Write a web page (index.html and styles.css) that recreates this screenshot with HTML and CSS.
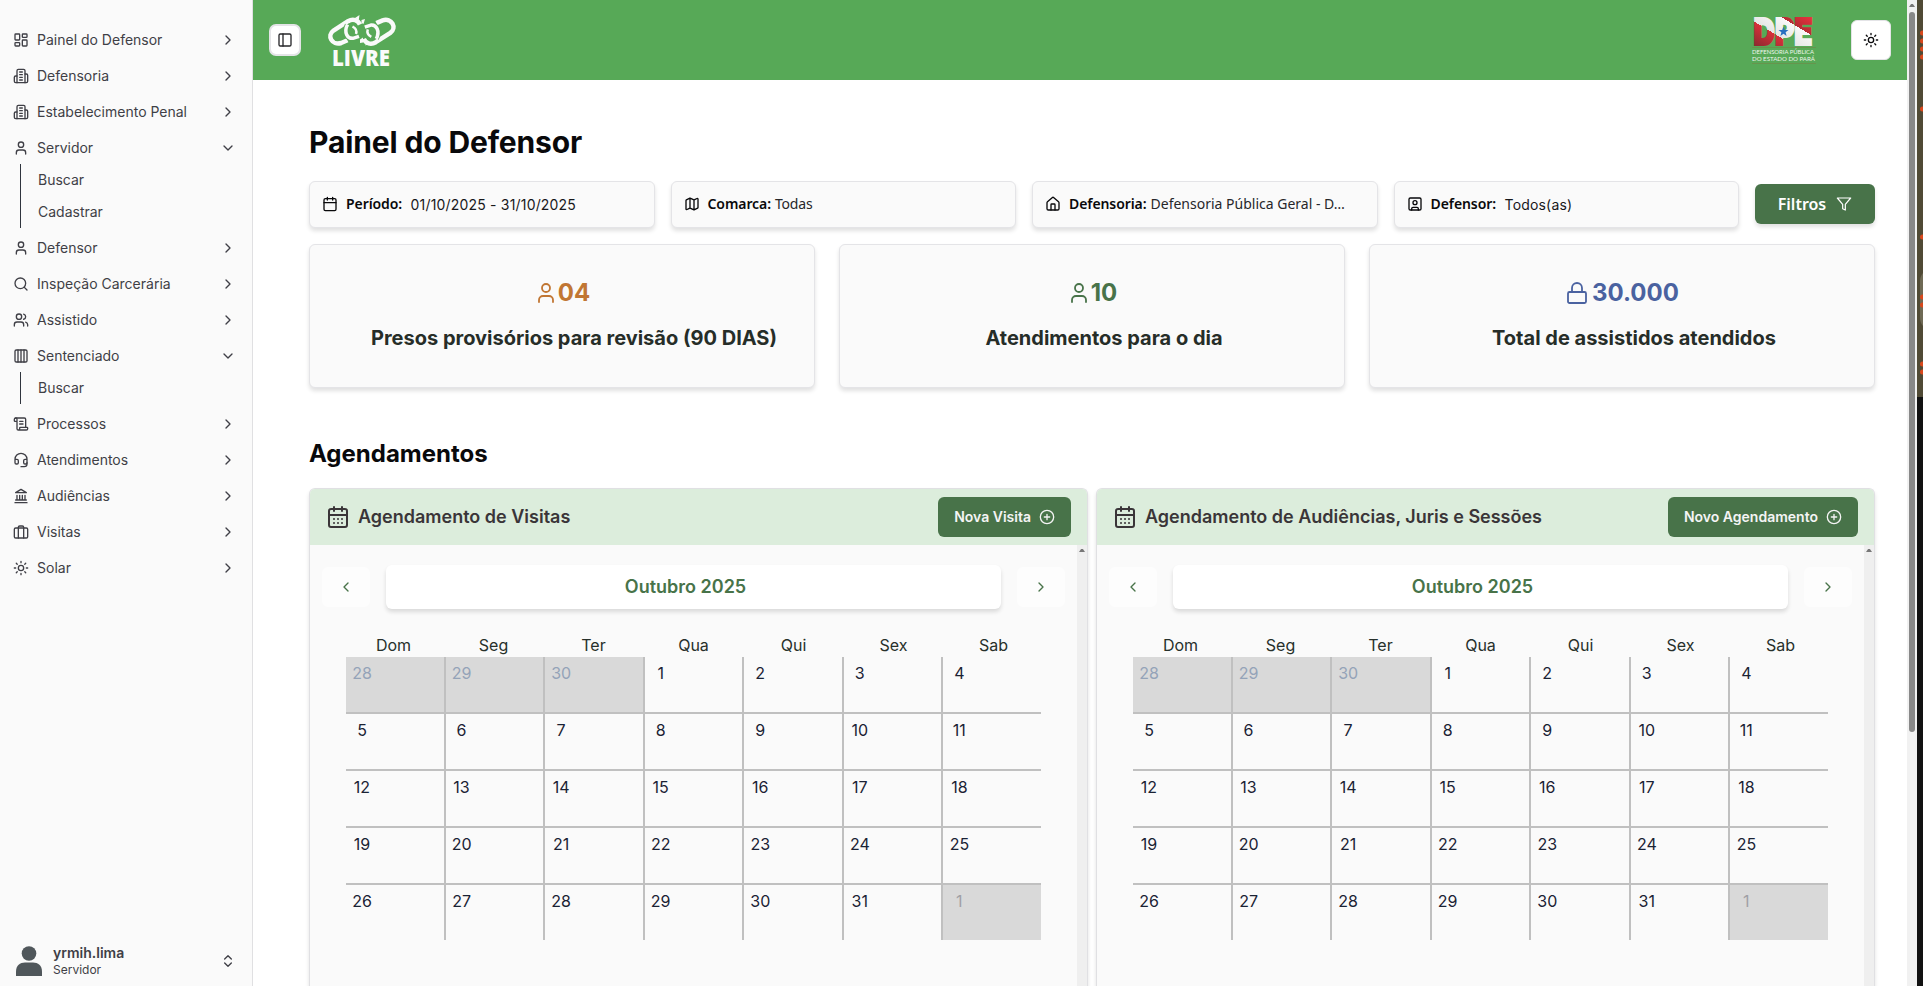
FILE: index.html
```html
<!DOCTYPE html>
<html lang="pt-BR">
<head>
<meta charset="utf-8">
<title>Painel do Defensor</title>
<link rel="stylesheet" href="styles.css">
</head>
<body>
<svg class="sprite" aria-hidden="true">
  <symbol id="dash" viewBox="0 0 24 24"><rect x="3" y="3" width="7" height="9" rx="1"/><rect x="14" y="3" width="7" height="5" rx="1"/><rect x="14" y="12" width="7" height="9" rx="1"/><rect x="3" y="16" width="7" height="5" rx="1"/></symbol>
  <symbol id="building" viewBox="0 0 24 24"><path d="M6 22V4a2 2 0 0 1 2-2h8a2 2 0 0 1 2 2v18Z"/><path d="M6 12H4a2 2 0 0 0-2 2v6a2 2 0 0 0 2 2h2"/><path d="M18 9h2a2 2 0 0 1 2 2v9a2 2 0 0 1-2 2h-2"/><path d="M10 6h4M10 10h4M10 14h4M10 18h4"/></symbol>
  <symbol id="user" viewBox="0 0 24 24"><path d="M19 21v-2a4 4 0 0 0-4-4H9a4 4 0 0 0-4 4v2"/><circle cx="12" cy="7" r="4"/></symbol>
  <symbol id="search" viewBox="0 0 24 24"><circle cx="11" cy="11" r="8"/><path d="m21 21-4.3-4.3"/></symbol>
  <symbol id="users" viewBox="0 0 24 24"><path d="M16 21v-2a4 4 0 0 0-4-4H6a4 4 0 0 0-4 4v2"/><circle cx="9" cy="7" r="4"/><path d="M22 21v-2a4 4 0 0 0-3-3.87"/><path d="M16 3.13a4 4 0 0 1 0 7.75"/></symbol>
  <symbol id="bars" viewBox="0 0 24 24"><rect x="3" y="3" width="18" height="18" rx="2"/><path d="M7.5 3v18M12 3v18M16.500 3v18"/></symbol>
  <symbol id="scroll" viewBox="0 0 24 24"><path d="M15 12h-5M15 8h-5M19 17V5a2 2 0 0 0-2-2H4"/><path d="M8 21h12a2 2 0 0 0 2-2v-1a1 1 0 0 0-1-1H11a1 1 0 0 0-1 1v1a2 2 0 1 1-4 0V5a2 2 0 1 0-4 0v2a1 1 0 0 0 1 1h3"/></symbol>
  <symbol id="headset" viewBox="0 0 24 24"><path d="M3 11h3a2 2 0 0 1 2 2v3a2 2 0 0 1-2 2H5a2 2 0 0 1-2-2v-5Zm0 0a9 9 0 1 1 18 0m0 0v5a2 2 0 0 1-2 2h-1a2 2 0 0 1-2-2v-3a2 2 0 0 1 2-2h3Z"/><path d="M21 16v2a4 4 0 0 1-4 4h-5"/></symbol>
  <symbol id="landmark" viewBox="0 0 24 24"><path d="M3 22h18M6 18v-7M10 18v-7M14 18v-7M18 18v-7M4 18h16M12 2l8 5H4z"/></symbol>
  <symbol id="luggage" viewBox="0 0 24 24"><path d="M8 21V5a2 2 0 0 1 2-2h4a2 2 0 0 1 2 2v16"/><rect x="2" y="6" width="20" height="15" rx="2"/></symbol>
  <symbol id="sun" viewBox="0 0 24 24"><circle cx="12" cy="12" r="4"/><path d="M12 2v2M12 20v2M4.930 4.930l1.410 1.410M17.660 17.660l1.410 1.410M2 12h2M20 12h2M6.340 17.660l-1.410 1.410M19.070 4.930l-1.410 1.410"/></symbol>
  <symbol id="right" viewBox="0 0 24 24"><path d="m9 18 6-6-6-6"/></symbol>
  <symbol id="left" viewBox="0 0 24 24"><path d="m15 18-6-6 6-6"/></symbol>
  <symbol id="down" viewBox="0 0 24 24"><path d="m6 9 6 6 6-6"/></symbol>
  <symbol id="updown" viewBox="0 0 24 24"><path d="m7 15 5 5 5-5M7 9l5-5 5 5"/></symbol>
  <symbol id="panel" viewBox="0 0 24 24"><rect x="3" y="3" width="18" height="18" rx="2"/><path d="M9 3v18"/></symbol>
  <symbol id="calendar" viewBox="0 0 24 24"><path d="M8 2v4M16 2v4M3 10h18"/><rect x="3" y="4" width="18" height="18" rx="2"/></symbol>
  <symbol id="days" viewBox="0 0 24 24"><path d="M8 2v4M16 2v4M3 10h18"/><rect x="3" y="4" width="18" height="18" rx="2"/><path d="M8 14h.01M12 14h.01M16 14h.01M8 18h.01M12 18h.01M16 18h.01"/></symbol>
  <symbol id="map" viewBox="0 0 24 24"><path d="M14.100 5.550a2 2 0 0 0 1.800 0l3.650-1.830A1 1 0 0 1 21 4.620v12.760a1 1 0 0 1-.55.9l-4.550 2.270a2 2 0 0 1-1.800 0l-4.200-2.100a2 2 0 0 0-1.800 0l-3.650 1.830A1 1 0 0 1 3 19.380V6.620a1 1 0 0 1 .55-.9L8.100 3.450a2 2 0 0 1 1.800 0zM15 5.760v15M9 3.240v15"/></symbol>
  <symbol id="home" viewBox="0 0 24 24"><path d="M15 21v-8a1 1 0 0 0-1-1h-4a1 1 0 0 0-1 1v8"/><path d="M3 10a2 2 0 0 1 .7-1.530l7-6a2 2 0 0 1 2.600 0l7 6A2 2 0 0 1 21 10v9a2 2 0 0 1-2 2H5a2 2 0 0 1-2-2z"/></symbol>
  <symbol id="portrait" viewBox="0 0 24 24"><rect x="3" y="3" width="18" height="18" rx="2"/><circle cx="12" cy="10" r="3"/><path d="M7 21v-2a2 2 0 0 1 2-2h6a2 2 0 0 1 2 2v2"/></symbol>
  <symbol id="funnel" viewBox="0 0 24 24"><path d="M22 3H2l8 9.460V19l4 2v-8.540z"/></symbol>
  <symbol id="lock" viewBox="0 0 24 24"><rect x="3" y="11" width="18" height="11" rx="1.500"/><path d="M7 11V7a5 5 0 0 1 10 0v4"/></symbol>
  <symbol id="plus" viewBox="0 0 24 24"><circle cx="12" cy="12" r="10"/><path d="M8 12h8M12 8v8"/></symbol>
</svg>
<div class="screen">
  <aside class="sidebar">
    <nav class="menu">
      <a class="item"><svg class="ic"><use href="#dash"/></svg><span>Painel do Defensor</span><svg class="ic"><use href="#right"/></svg></a>
      <a class="item"><svg class="ic"><use href="#building"/></svg><span>Defensoria</span><svg class="ic"><use href="#right"/></svg></a>
      <a class="item"><svg class="ic"><use href="#building"/></svg><span>Estabelecimento Penal</span><svg class="ic"><use href="#right"/></svg></a>
      <div>
        <a class="item"><svg class="ic"><use href="#user"/></svg><span>Servidor</span><svg class="ic"><use href="#down"/></svg></a>
        <div class="sub"><a>Buscar</a><a>Cadastrar</a></div>
      </div>
      <a class="item"><svg class="ic"><use href="#user"/></svg><span>Defensor</span><svg class="ic"><use href="#right"/></svg></a>
      <a class="item"><svg class="ic"><use href="#search"/></svg><span>Inspeção Carcerária</span><svg class="ic"><use href="#right"/></svg></a>
      <a class="item"><svg class="ic"><use href="#users"/></svg><span>Assistido</span><svg class="ic"><use href="#right"/></svg></a>
      <div>
        <a class="item"><svg class="ic"><use href="#bars"/></svg><span>Sentenciado</span><svg class="ic"><use href="#down"/></svg></a>
        <div class="sub"><a>Buscar</a></div>
      </div>
      <a class="item"><svg class="ic"><use href="#scroll"/></svg><span>Processos</span><svg class="ic"><use href="#right"/></svg></a>
      <a class="item"><svg class="ic"><use href="#headset"/></svg><span>Atendimentos</span><svg class="ic"><use href="#right"/></svg></a>
      <a class="item"><svg class="ic"><use href="#landmark"/></svg><span>Audiências</span><svg class="ic"><use href="#right"/></svg></a>
      <a class="item"><svg class="ic"><use href="#luggage"/></svg><span>Visitas</span><svg class="ic"><use href="#right"/></svg></a>
      <a class="item"><svg class="ic"><use href="#sun"/></svg><span>Solar</span><svg class="ic"><use href="#right"/></svg></a>
    </nav>
    <div class="account">
      <svg class="avatar" viewBox="0 0 26 30"><circle cx="13" cy="7.500" r="7.300"/><path d="M0 30v-4.500C0 19.500 4 16.500 9 16.500h8c5 0 9 3 9 9V30z"/></svg>
      <div class="who"><b>yrmih.lima</b><small>Servidor</small></div>
      <svg class="ic"><use href="#updown"/></svg>
    </div>
  </aside>
  <div class="page">
    <header class="topbar">
      <button class="toggle"><svg class="ic"><use href="#panel"/></svg></button>
      <svg class="livre" viewBox="0 0 68 52">
        <defs>
          <g id="link" fill="none">
            <path d="M19.500 25.300L13.200 28C4 31 -1.500 20.500 5.500 15.500L20 6.200C25 3.200 30 5 32 9.500" stroke="#fafafa" stroke-width="4.500"/>
            <path d="M19.500 10C15.500 17.500 19.500 24 25 23.300L31 21.300" stroke="#57a957" stroke-width="5.500"/>
            <path d="M19.500 9.500C15.500 17.500 19.500 24 25 23.300L31 21.300" stroke="#fafafa" stroke-width="3.500"/>
            <path d="M24.500 11.500C27.500 13 29 16 28 19" stroke="#fafafa" stroke-width="2.500"/>
          </g>
        </defs>
        <use href="#link"/><use href="#link" transform="rotate(180 33.900 16.700)"/>
        <path d="M27 3l4.500-3-.7 5zM33.500 5l3.500-1-1.500 5-2-1zM32 24.500l3-2v5l-3 .5zM37.500 26l3 3-3 1.500z" fill="#fafafa"/>
        <text x="4" y="51" textLength="58" lengthAdjust="spacingAndGlyphs">LIVRE</text>
      </svg>
      <div class="spacer"></div>
      <svg class="dpe" viewBox="0 0 66 48">
        <defs>
          <linearGradient id="band" gradientUnits="userSpaceOnUse" x1="3" y1="30" x2="30.800" y2="-16.300">
            <stop offset="0" stop-color="#8c2a30"/><stop offset=".38" stop-color="#d9303a"/><stop offset=".38" stop-color="#e6e6e6"/><stop offset=".71" stop-color="#f8f8f8"/><stop offset=".71" stop-color="#b52b33"/><stop offset="1" stop-color="#e8323e"/>
          </linearGradient>
        </defs>
        <text class="mark" x="1.500" y="28.700" textLength="59" lengthAdjust="spacingAndGlyphs" fill="url(#band)" stroke="url(#band)">DPE</text>
        <path d="M31.500 10.500l1.300 3.400 3.700.1-2.900 2.300 1 3.600-3.100-2.100-3.100 2.100 1-3.600-2.900-2.300 3.700-.1z" fill="#2a6fc0"/>
        <path d="M0 31.500h64M0 47.500h64" stroke="#6b8f4a" stroke-width=".8"/>
        <text class="cap" x="0" y="38.300" textLength="62" lengthAdjust="spacingAndGlyphs">DEFENSORIA PÚBLICA</text>
        <text class="cap" x="0" y="44.800" textLength="63" lengthAdjust="spacingAndGlyphs">DO ESTADO DO PARÁ</text>
      </svg>
      <button class="theme"><svg class="ic"><use href="#sun"/></svg></button>
    </header>
    <main class="content">
      <h1>Painel do Defensor</h1>
      <div class="filters">
        <div class="field"><svg class="ic"><use href="#calendar"/></svg><b>Período:</b><span class="plain">01/10/2025 - 31/10/2025</span></div>
        <div class="field"><svg class="ic"><use href="#map"/></svg><b>Comarca:</b><span class="soft">Todas</span></div>
        <div class="field"><svg class="ic"><use href="#home"/></svg><b>Defensoria:</b><span class="soft long">Defensoria Pública Geral - D…</span></div>
        <div class="field"><svg class="ic"><use href="#portrait"/></svg><b>Defensor:</b><span class="plain">Todos(as)</span></div>
        <button class="filter-btn"><span>Filtros</span><svg class="ic"><use href="#funnel"/></svg></button>
      </div>
      <div class="stats">
        <section class="stat orange"><div class="num"><svg class="ic"><use href="#user"/></svg>04</div><p>Presos provisórios para revisão (90 DIAS)</p></section>
        <section class="stat green"><div class="num"><svg class="ic"><use href="#user"/></svg>10</div><p>Atendimentos para o dia</p></section>
        <section class="stat blue"><div class="num wide"><svg class="ic"><use href="#lock"/></svg>30.000</div><p>Total de assistidos atendidos</p></section>
      </div>
      <h2>Agendamentos</h2>
      <div class="agendas">
        <section class="agenda">
          <div class="agenda-head"><svg class="ic"><use href="#days"/></svg><h3>Agendamento de Visitas</h3><button class="new">Nova Visita<svg class="ic"><use href="#plus"/></svg></button></div>
          <div class="agenda-body"><div class="calendar"></div><div class="track"><i></i></div></div>
        </section>
        <section class="agenda">
          <div class="agenda-head"><svg class="ic"><use href="#days"/></svg><h3>Agendamento de Audiências, Juris e Sessões</h3><button class="new">Novo Agendamento<svg class="ic"><use href="#plus"/></svg></button></div>
          <div class="agenda-body"><div class="calendar"></div><div class="track"><i></i></div></div>
        </section>
      </div>
    </main>
  </div>
  <div class="scrollbar"><i></i><b></b></div>
  <svg class="edge" viewBox="0 0 6 986"><path d="M0 0h6v397H0z" fill="#504a35"/><path d="M0 397h6v589H0z" fill="#111"/><path d="M6 273c-2 2-3 5-3 8v36c0 4 1 7 3 9z" fill="#6f6a55"/><g fill="#d9481c"><circle cx="5.500" cy="33" r="2.500"/><circle cx="5.500" cy="41" r="2.500"/><circle cx="5.500" cy="49" r="2.500"/><circle cx="5.500" cy="57" r="2.500"/><circle cx="5.500" cy="109" r="2.500"/><circle cx="5.500" cy="237" r="2.500"/><circle cx="5.500" cy="297" r="2.500"/><circle cx="5.500" cy="305" r="2.500"/><circle cx="5.500" cy="364" r="2.500"/><circle cx="5.500" cy="372" r="2.500"/></g></svg>
</div>
<script src="calendar.js"></script>
</body>
</html>
```
FILE: styles.css
```css
* { box-sizing: border-box; }
body { margin: 0; font-family: Inter, sans-serif; color: #09090b; background: #fff; overflow: hidden; }
h1, h2, h3, p { margin: 0; }
button { font: inherit; border: 0; padding: 0; }
.sprite { display: none; }
.ic { width: 16px; height: 16px; flex: none; fill: none; stroke: currentColor; stroke-width: 2; stroke-linecap: round; stroke-linejoin: round; }
.screen { display: flex; width: 1923px; height: 986px; overflow: hidden; }

.sidebar { width: 253px; flex: none; display: flex; flex-direction: column; justify-content: space-between; background: #fafafa; border-right: 1px solid #e0e0e2; color: #3f3f46; padding: 24px 16px 0 13px; }
.menu { display: flex; flex-direction: column; gap: 4px; font-size: 14px; }
.item { display: flex; align-items: center; height: 32px; gap: 8px; }
.item span { flex: 1; white-space: nowrap; line-height: 20px; }
.sub { margin-left: 7px; padding-left: 17px; border-left: 1px solid #2f343d; display: flex; flex-direction: column; }
.sub a { height: 32px; line-height: 32px; }
.account { display: flex; align-items: center; height: 50px; padding-left: 3px; }
.avatar { width: 26px; height: 30px; fill: #50575b; }
.who { flex: 1; margin-left: 11px; display: flex; flex-direction: column; }
.who b { font-size: 14px; font-weight: 600; line-height: 17px; }
.who small { margin-top: 1px; font-size: 12px; line-height: 16px; }

.page { width: 1654px; flex: none; display: flex; flex-direction: column; }
.topbar { height: 80px; flex: none; display: flex; align-items: center; background: #57a957; padding: 0 16px; }
.toggle { width: 32px; height: 32px; display: flex; align-items: center; justify-content: center; border: 2px solid #e4e4e7; border-radius: 7px; background: #fff; color: #27272a; }
.livre { width: 68px; height: 52px; margin-left: 27px; margin-top: 1px; overflow: visible; }
.livre text { font: 800 22px "Open Sans", sans-serif; fill: #fafafa; }
.spacer { flex: 1; }
.dpe { width: 66px; height: 48px; margin-right: 33px; overflow: visible; }
.mark { stroke-width: 2px; font: 900 36.500px Inter, sans-serif; }
.cap { font: 400 6px Lato, sans-serif; fill: #eef5ec; }
.theme { width: 40px; height: 40px; display: flex; align-items: center; justify-content: center; border: 1px solid #e4e4e7; border-radius: 6px; background: #fff; color: #09090b; }

.content { flex: 1; min-height: 0; padding: 44px 32px 0 56px; display: flex; flex-direction: column; }
h1 { font-size: 30px; line-height: 36px; font-weight: 700; letter-spacing: -.14px; }
.filters { display: flex; gap: 16px; align-items: flex-start; margin-top: 21px; }
.field { flex: 1; height: 47px; display: flex; align-items: center; padding: 0 0 1px 12px; border: 1px solid #e4e4e7; border-radius: 6px; background: #fafafa; box-shadow: 0 3px 4px rgba(0,0,0,.12); font: 14px/20px "Noto Sans", sans-serif; white-space: nowrap; }
.field b { font-weight: 600; margin-left: 8px; letter-spacing: -.08px; }
.field .soft { margin-left: 4px; color: #27272a; letter-spacing: -.2px; }
.field .long { letter-spacing: 0; }
.field .plain { margin-left: 8.5px; font-family: Inter, sans-serif; color: #18181b; letter-spacing: .18px; padding-top: 1px; }
.filter-btn { width: 120px; height: 40px; margin-top: 3px; display: flex; align-items: center; justify-content: center; gap: 10px; border-radius: 6px; background: #487349; color: #fff; font: 600 16px "Noto Sans", sans-serif; box-shadow: 0 3px 4px rgba(0,0,0,.12); }
.filter-btn .ic { stroke-width: 1.800; }
.stats { display: grid; grid-template-columns: repeat(3, 1fr); gap: 24px; margin-top: 16px; }
.stat { height: 144px; padding-top: 32px; border: 1px solid #e4e4e7; border-radius: 6px; background: #fafafa; box-shadow: 0 3px 4px rgba(0,0,0,.12); text-align: center; }
.num { display: flex; align-items: center; justify-content: center; height: 32px; font-size: 24px; line-height: 32px; font-weight: 700; }
.num .ic { width: 24px; height: 24px; stroke-width: 1.800; }
.num.wide { gap: 3px; }
.stat p { margin-top: 15px; padding-left: 24px; font-size: 20px; line-height: 28px; font-weight: 700; color: #262d28; }
.orange { color: #c17633; }
.green { color: #487349; }
.blue { color: #4a62a0; }
h2 { margin-top: 50px; font-size: 24px; line-height: 32px; font-weight: 700; }

.agendas { flex: 1; min-height: 0; display: grid; grid-template-columns: 1fr 1fr; gap: 8px; margin-top: 18px; }
.agenda { display: flex; flex-direction: column; border: 1px solid #e0e0e3; border-bottom: 0; border-radius: 6px 6px 0 0; background: #fafafa; overflow: hidden; box-shadow: 0 3px 4px rgba(0,0,0,.12); }
.agenda-head { height: 56px; flex: none; display: flex; align-items: center; padding: 0 16px; background: #dceddc; color: #3a3538; }
.agenda-head > .ic { width: 24px; height: 24px; }
.agenda-head h3 { flex: 1; margin-left: 8px; padding-bottom: 1px; font-size: 18px; line-height: 27px; font-weight: 600; }
.new { height: 40px; display: flex; align-items: center; gap: 8px; padding: 0 16px; border-radius: 6px; background: #487349; color: #f4f4f4; font-size: 14px; line-height: 20px; font-weight: 600; }
.agenda-body { flex: 1; display: flex; }
.calendar { flex: 1; padding: 20px 12px 0; }
.track { width: 10px; background: #efefef; padding: 4px 2px; }
.track i, .scrollbar b { display: block; width: 6px; height: 3px; background: #777; clip-path: polygon(35% 0, 65% 0, 100% 100%, 0 100%); }
.month { display: flex; gap: 16px; align-items: center; }
.month button { width: 48px; height: 40px; display: flex; align-items: center; justify-content: center; border-radius: 6px; background: #fdfdfd; color: #487349; }
.month strong { flex: 1; height: 44px; line-height: 44px; padding-right: 16px; text-align: center; font-size: 18px; font-weight: 600; color: #487349; background: #fff; border-radius: 6px; box-shadow: 0 3px 4px rgba(0,0,0,.13); }
.week { display: grid; grid-template-columns: repeat(7, 1fr); margin: 24px 21.5px 0; font-size: 16px; line-height: 24px; text-align: center; color: #27302b; }
.days { display: grid; grid-template-columns: repeat(6, calc((100% - 12px) / 7 + 2px)) 1fr; margin: 0 24px; }
.day { height: 57px; border-right: 2px solid #c0c0c0; border-bottom: 2px solid #c0c0c0; color: #1a2234; }
.day span { display: block; width: 32px; line-height: 32px; text-align: center; font-size: 16px; }
.day:nth-child(7n) { border-right: 0; }
.day:nth-child(n+29) { border-bottom: 0; height: 55px; }
.out { background: #d9d9d9; color: #94a3b8; }
.day.out:last-child { color: #a0a0a6; }

.scrollbar { width: 10px; flex: none; background: #f1f1f1; padding: 4px 2px; display: flex; flex-direction: column-reverse; justify-content: flex-end; gap: 5px; }
.scrollbar i { width: 6px; height: 720px; border-radius: 3px; background: #888; }
.edge { width: 6px; height: 986px; flex: none; }
```
FILE: calendar.js
```js
const names = ["Dom", "Seg", "Ter", "Qua", "Qui", "Sex", "Sab"];
const icon = (id) => `<svg class="ic"><use href="#${id}"/></svg>`;
const cells = [];
for (let i = 0; i < 35; i++) {
  const date = new Date(2025, 8, 28 + i);
  const cls = date.getMonth() === 9 ? "day" : "day out";
  cells.push(`<div class="${cls}"><span>${date.getDate()}</span></div>`);
}
document.querySelectorAll(".calendar").forEach((el) => {
  el.innerHTML =
    `<div class="month"><button>${icon("left")}</button><strong>Outubro 2025</strong><button>${icon("right")}</button></div>` +
    `<div class="week">${names.map((n) => `<span>${n}</span>`).join("")}</div>` +
    `<div class="days">${cells.join("")}</div>`;
});
```
